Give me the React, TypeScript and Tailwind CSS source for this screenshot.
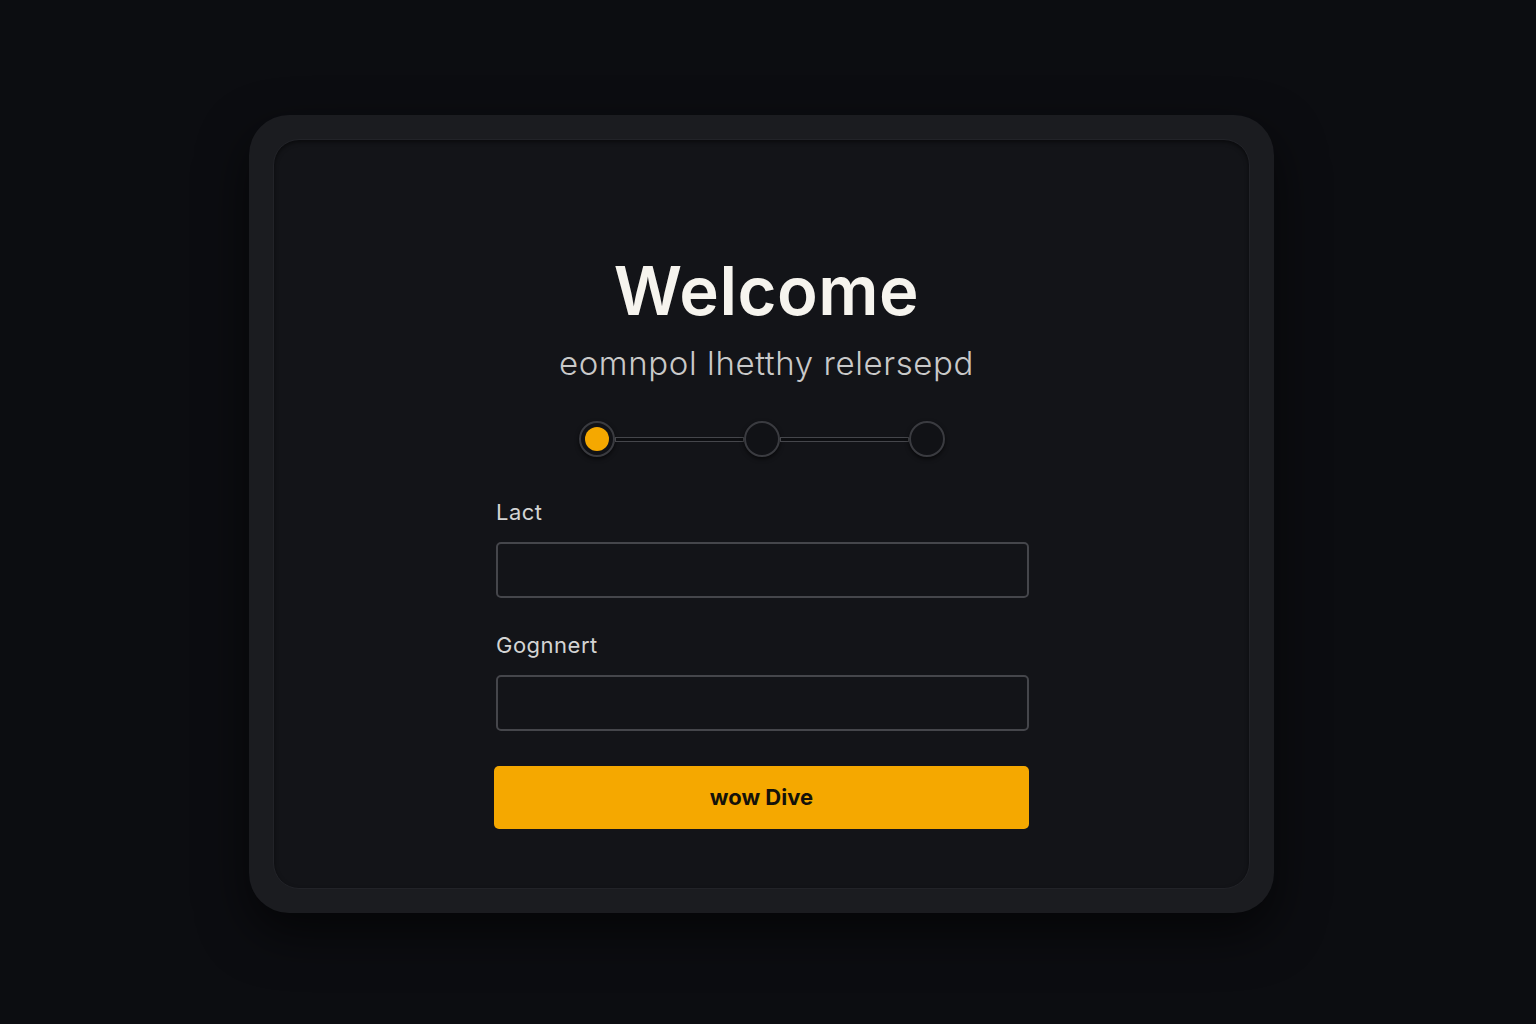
import React from 'react';

const font = { fontFamily: 'Inter, "Noto Sans", sans-serif' };

function Stepper() {
  return (
    <div className="flex items-center w-[366px]">
      <div className="w-[36px] h-[36px] rounded-full border-2 border-[#3a3b40] bg-[#111216] flex items-center justify-center shadow-[0_2px_4px_rgba(0,0,0,0.6)]">
        <div className="w-[24px] h-[24px] rounded-full bg-[#f5a800]" />
      </div>
      <div className="flex-1 h-[5px] border border-[#45464b] bg-[#0d0e11]" />
      <div className="w-[36px] h-[36px] rounded-full border-2 border-[#3a3b40] bg-[#111216] shadow-[0_2px_4px_rgba(0,0,0,0.6)]" />
      <div className="flex-1 h-[5px] border border-[#45464b] bg-[#0d0e11]" />
      <div className="w-[36px] h-[36px] rounded-full border-2 border-[#3a3b40] bg-[#111216] shadow-[0_2px_4px_rgba(0,0,0,0.6)]" />
    </div>
  );
}

function Field({ label }: { label: string }) {
  return (
    <div className="flex flex-col w-[533px] ml-[2px]">
      <label className="text-[22px] leading-[28px] text-[#d4d4d4] tracking-[0.5px]">{label}</label>
      <input
        type="text"
        className="mt-[16px] h-[56px] w-full rounded-[5px] border-2 border-[#45464b] bg-[#131418] outline-none px-4 text-[#eee]"
      />
    </div>
  );
}

export default function App() {
  return (
    <div className="min-h-[1024px] w-full bg-[#0c0d11] pt-[115px] pl-[249px]" style={font}>
      <div className="w-[1025px] h-[798px] rounded-[40px] bg-[#1b1c20] p-[24px] shadow-[0_20px_50px_rgba(0,0,0,0.6)]">
        <div className="h-full w-full rounded-[26px] bg-[#131418] border border-[#222328] shadow-[inset_0_2px_4px_rgba(0,0,0,0.5)] flex flex-col items-center pt-[111px]">
          <h1 className="text-[67px] leading-[80px] font-semibold text-[#f6f4ee] tracking-[0.5px] ml-[10px]">Welcome</h1>
          <p className="mt-[12px] ml-[10px] text-[33px] leading-[40px] text-[#c9c9c9] font-light tracking-[0.6px]">eomnpol lhetthy relersepd</p>
          <div className="mt-[38px]">
            <Stepper />
          </div>
          <div className="mt-[41px] flex flex-col gap-[33px]">
            <Field label="Lact" />
            <Field label="Gognnert" />
          </div>
          <button className="mt-[35px] w-[535px] h-[63px] rounded-[5px] bg-[#f5a800] text-[22px] font-bold text-[#15120a]">
            wow Dive
          </button>
        </div>
      </div>
    </div>
  );
}
